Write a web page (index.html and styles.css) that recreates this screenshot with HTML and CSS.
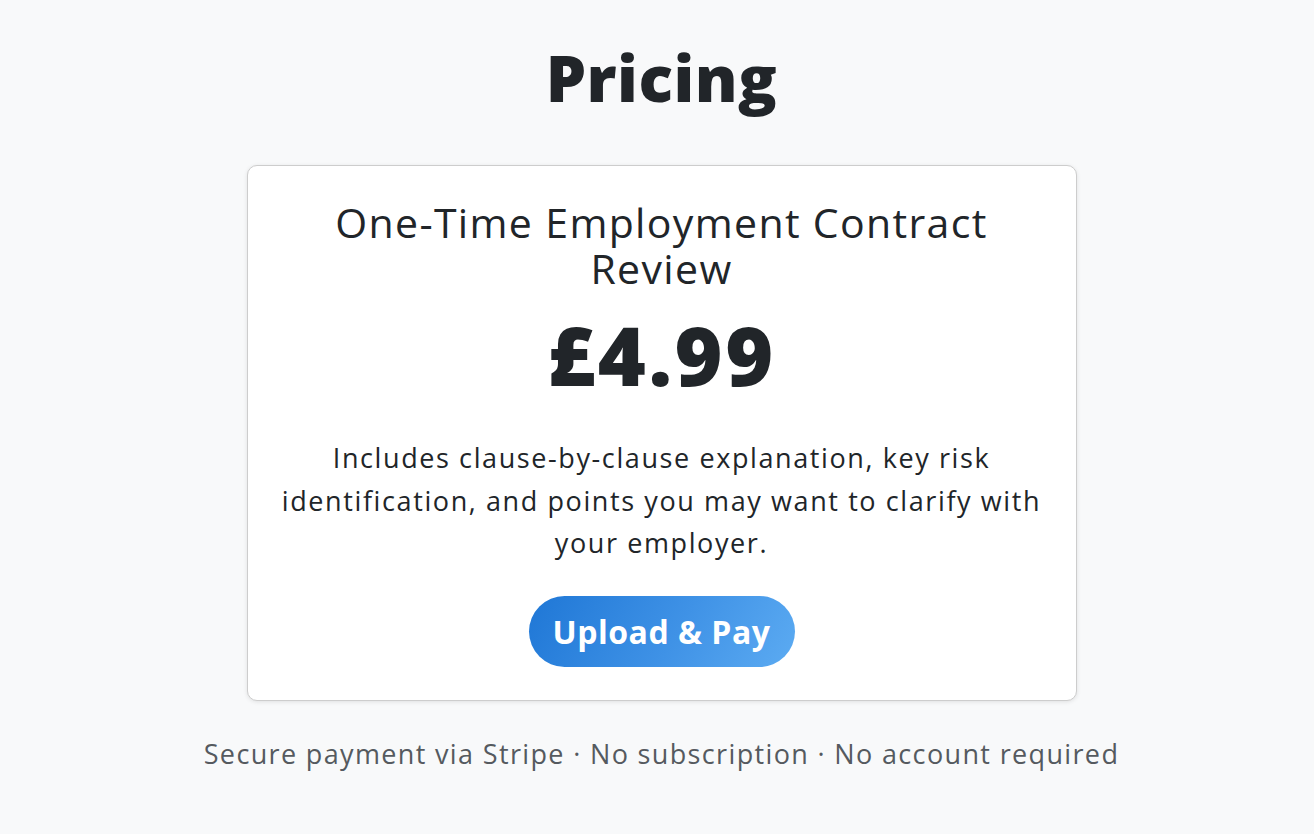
FILE: index.html
```html
<!DOCTYPE html>
<html lang="en">
<head>
<meta charset="utf-8">
<title>Pricing</title>
<link rel="stylesheet" href="styles.css">
</head>
<body>
<main class="page">
  <h1 class="heading">Pricing</h1>
  <section class="card">
    <h2 class="card-title">One-Time Employment Contract<br>Review</h2>
    <div class="price">£4.99</div>
    <p class="desc">Includes clause-by-clause explanation, key risk<br>identification, and points you may want to clarify with<br>your employer.</p>
    <button class="btn">Upload &amp; Pay</button>
  </section>
  <p class="note">Secure payment via Stripe · No subscription · No account required</p>
</main>
</body>
</html>
```
FILE: styles.css
```css
* { box-sizing: border-box; }
html, body { margin: 0; padding: 0; }
body {
  background: #f8f9fa;
  color: #212529;
  font-family: "Open Sans", "DejaVu Sans", sans-serif;
}
.page {
  display: flex;
  flex-direction: column;
  align-items: center;
  padding-left: 9px;
}
.heading {
  margin: 41px 0 0;
  font-size: 64px;
  line-height: 74px;
  font-weight: 800;
  letter-spacing: 0.5px;
  color: #212529;
}
.card {
  margin-top: 50px;
  width: 830px;
  background: #fff;
  border: 1px solid #cdcdcd;
  border-radius: 10px;
  box-shadow: 0 1px 4px rgba(0,0,0,0.1);
  padding: 33px 20px 33px;
  display: flex;
  flex-direction: column;
  align-items: center;
  text-align: center;
}
.card-title {
  margin: 0;
  font-size: 41px;
  line-height: 46px;
  font-weight: 400;
  letter-spacing: 1.35px;
}
.price {
  margin-top: 15px;
  font-size: 82px;
  line-height: 96px;
  font-weight: 800;
  letter-spacing: 2.5px;
}
.desc {
  margin: 35px 0 0;
  font-size: 27px;
  line-height: 42.5px;
  letter-spacing: 1.6px;
  white-space: nowrap;
}
.btn {
  margin-top: 31px;
  width: 266px;
  height: 71px;
  border: 0;
  border-radius: 36px;
  background: linear-gradient(120deg, #1f77d6 0%, #3f92e6 55%, #5cabf2 100%);
  color: #fff;
  font-family: inherit;
  font-size: 32px;
  font-weight: 700;
  letter-spacing: 0.5px;
  cursor: pointer;
}
.note {
  margin: 33px 0 0;
  font-size: 27px;
  line-height: 40px;
  letter-spacing: 1.35px;
  color: #555a5f;
}
```
